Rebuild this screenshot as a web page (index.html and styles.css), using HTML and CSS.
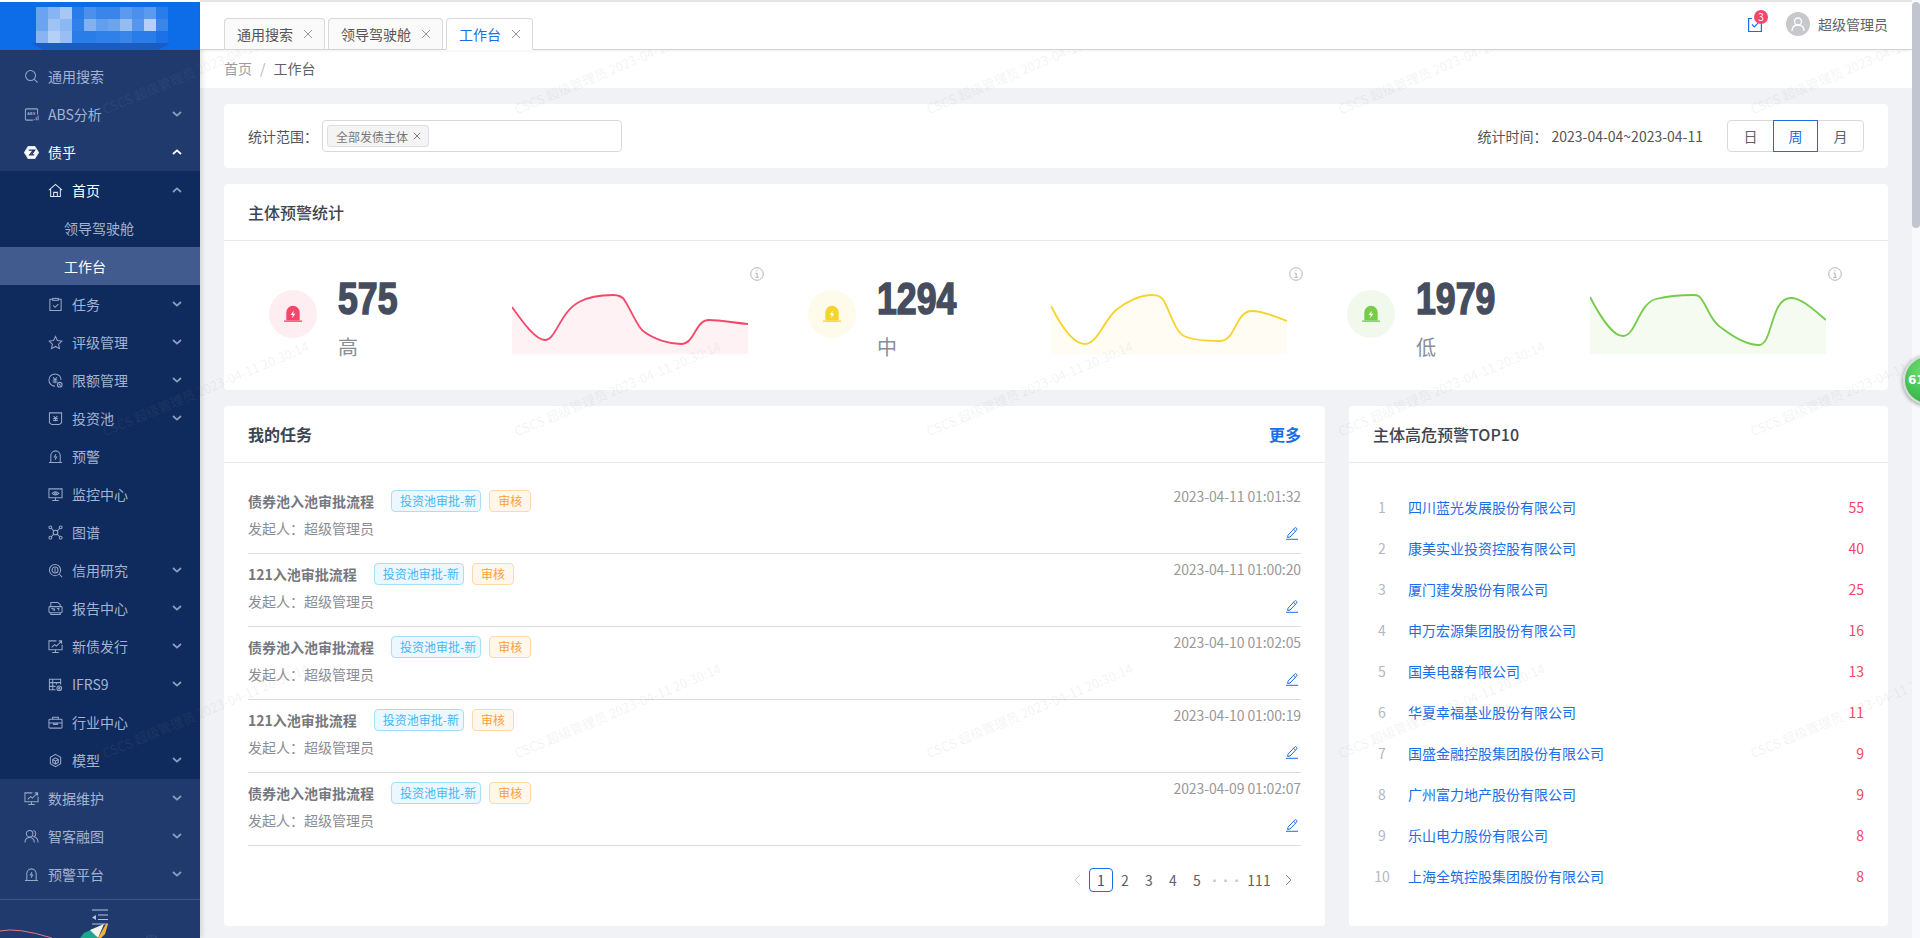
FILE: index.html
```html
<!DOCTYPE html>
<html lang="zh-CN">
<head>
<meta charset="UTF-8">
<title>工作台</title>
<link rel="stylesheet" href="styles.css">
</head>
<body>

<!-- shared icon set for the side menu -->
<svg class="icon-defs" xmlns="http://www.w3.org/2000/svg">
    <symbol id="i-search" viewBox="0 0 16 16"><circle cx="7" cy="7" r="5.3"/><path d="M11 11l3.6 3.6"/></symbol>
    <symbol id="i-home" viewBox="0 0 16 16"><path d="M1 7.5L8 1.5l7 6M2.8 6.5V14.500h10.400V6.500"/><path d="M6 14.500V10h4v4.500"/></symbol>
    <symbol id="i-task" viewBox="0 0 16 16"><path d="M5 2.500H2v12h12v-12h-3"/><rect x="5" y="1.500" width="6" height="2"/><path d="M5.500 9l2 2 3.500-3.500"/></symbol>
    <symbol id="i-star" viewBox="0 0 16 16"><path d="M8 1.500l2 4.400 4.700.6-3.400 3.300.9 4.700L8 12.200l-4.200 2.300.9-4.700L1.300 6.500 6 5.900z"/></symbol>
    <symbol id="i-limit" viewBox="0 0 16 16"><path d="M14 7.500A6.500 6.500 0 1 0 7.500 14"/><path d="M5.500 4.500l2 2.500 2-2.500M5 7.500h5M5 9.500h5M7.500 7v4"/><circle cx="12.500" cy="12.500" r="2.500"/><path d="M11.500 11.500l2 2"/></symbol>
    <symbol id="i-pool" viewBox="0 0 16 16"><path d="M1.500 2h13v10.500L12 14.500H4l-2.500-2z"/><path d="M6 5.500l2 2 2-2M5.500 8h5M5.500 10h5M8 7.500V11"/></symbol>
    <symbol id="i-alarm" viewBox="0 0 16 16"><path d="M3 14.500V7a5 5 0 0 1 10 0v7.500M1 14.500h14"/><path d="M8.500 5.500L6.800 8.500h2.400L7.500 11.500"/></symbol>
    <symbol id="i-monitor" viewBox="0 0 16 16"><path d="M1 2h14v9.500H1zM8 11.500v2.500M4.500 14.500h7"/><path d="M4.500 6.800C6.500 4.500 9.500 4.500 11.500 6.800 9.500 9 6.500 9 4.500 6.800z"/><circle cx="8" cy="6.800" r="1"/></symbol>
    <symbol id="i-graph" viewBox="0 0 16 16"><circle cx="8" cy="8" r="2.500"/><circle cx="2.500" cy="2.500" r="1.500"/><circle cx="13.500" cy="2.500" r="1.500"/><circle cx="2.500" cy="13.500" r="1.500"/><circle cx="13.500" cy="13.500" r="1.500"/><path d="M3.600 3.600l2.600 2.600M12.400 3.600L9.800 6.200M3.600 12.400l2.600-2.600M12.400 12.400L9.800 9.800"/></symbol>
    <symbol id="i-credit" viewBox="0 0 16 16"><circle cx="7.500" cy="7.500" r="6"/><circle cx="7.500" cy="7.500" r="3.200"/><path d="M12 12l3 3M6.500 6.500h2M6.500 8.500h2"/></symbol>
    <symbol id="i-report" viewBox="0 0 16 16"><path d="M3 6V1.500h7.500L13 4v2"/><rect x="1" y="6" width="14" height="6.500" rx="1"/><path d="M3 12.500v2h10v-2M3.500 8h2v2.500M7 8v2.500M9.500 8h2v2.500"/></symbol>
    <symbol id="i-issue" viewBox="0 0 16 16"><path d="M9 2H1v9.500h14V6M8 11.500v2.500M4.500 14.500h7"/><path d="M4 9l3-3 2 1.500L14 2.500M11.500 2H14.500v3"/></symbol>
    <symbol id="i-ifrs" viewBox="0 0 16 16"><path d="M8 13.500H1.500v-11h12V8M1.500 6h12M1.500 10H8M5 2.500v11M9 6v2"/><circle cx="12" cy="12" r="2.500"/><circle cx="12" cy="12" r=".7"/></symbol>
    <symbol id="i-case" viewBox="0 0 16 16"><rect x="1" y="4.500" width="14" height="9.500" rx="1"/><path d="M5 4.500V2.500h6v2M1 8.500h14M6 8.500v1.500h4V8.500"/></symbol>
    <symbol id="i-cube" viewBox="0 0 16 16"><path d="M8 1.500l5.500 3.200v6.600L8 14.500l-5.500-3.200V4.700z"/><path d="M8 5.200l3 1.800v3L8 11.800 5 10V7zM5 7l3 1.700L11 7M8 8.700v3.100"/></symbol>
    <symbol id="i-users" viewBox="0 0 16 16"><circle cx="6" cy="5" r="3.500"/><path d="M1 14.500c0-3.500 2-5.500 5-5.500s5 2 5 5.500M10 1.700a3.500 3.500 0 0 1 .5 6.600c2.500.5 4.500 2.500 4.500 6.200"/></symbol>
    <symbol id="i-down" viewBox="0 0 10 6"><path d="M1 1l4 3.600L9 1"/></symbol>
    <symbol id="i-up" viewBox="0 0 10 6"><path d="M1 5l4-3.600L9 5"/></symbol>
    <symbol id="i-close" viewBox="0 0 10 10"><path d="M1 1l8 8M9 1l-8 8"/></symbol>
    <symbol id="i-bell" viewBox="0 0 18 18"><path d="M2.300 15.500V7.500a6.700 6.700 0 0 1 13.400 0v8z"/><rect x="0" y="15.500" width="18" height="1.300"/><path class="bolt" d="M9.800 5.500L6.700 10h2l-.6 3.300 3.200-4.600H9.200z"/></symbol>
    <symbol id="i-info" viewBox="0 0 14 14"><circle cx="7" cy="7" r="6.300"/><path d="M5.500 6.200H7.200v4M5.300 10.400h3.500M6.300 3.800h1.200"/></symbol>
    <symbol id="i-pen" viewBox="0 0 14 14"><path d="M3 9.200l6.500-7a1.300 1.300 0 0 1 2 0 1.400 1.400 0 0 1 0 2L5 11l-2.400.5zM8.500 3.300l2.200 2M1 13.300h12"/></symbol>
</svg>

<div class="app">

    <aside class="sidebar">
        <div class="logo">
            <svg width="200" height="48" viewBox="0 0 200 48">
                <path d="M31 41H170L158 48H44z" fill="#1b5cc2"/>
                <path d="M36 5H60L82 7H36z" fill="#4a8cec"/>
                <g>
                    <rect x="36" y="5" width="12" height="12" fill="#6aa4f0"/><rect x="48" y="5" width="12" height="12" fill="#86b5f2"/><rect x="60" y="5" width="12" height="12" fill="#a8c7f4"/><rect x="72" y="5" width="12" height="12" fill="#2a7de8"/><rect x="84" y="5" width="12" height="12" fill="#4b90ec"/><rect x="96" y="5" width="12" height="12" fill="#3a85ea"/><rect x="108" y="5" width="12" height="12" fill="#3a85ea"/><rect x="120" y="5" width="12" height="12" fill="#5b9bef"/><rect x="132" y="5" width="12" height="12" fill="#4b90ec"/><rect x="144" y="5" width="12" height="12" fill="#5b9bef"/><rect x="156" y="5" width="12" height="12" fill="#2a7de8"/>
                    <rect x="36" y="17" width="12" height="12" fill="#6aa4f0"/><rect x="48" y="17" width="12" height="12" fill="#a0c3f5"/><rect x="60" y="17" width="12" height="12" fill="#8ab8f3"/><rect x="72" y="17" width="12" height="12" fill="#3080ea"/><rect x="84" y="17" width="12" height="12" fill="#82b0f0"/><rect x="96" y="17" width="12" height="12" fill="#60a0ee"/><rect x="108" y="17" width="12" height="12" fill="#6ca5ee"/><rect x="120" y="17" width="12" height="12" fill="#94bcf2"/><rect x="132" y="17" width="12" height="12" fill="#5696ec"/><rect x="144" y="17" width="12" height="12" fill="#b4d0f8"/><rect x="156" y="17" width="12" height="12" fill="#3a85ea"/>
                    <rect x="36" y="29" width="12" height="12" fill="#88b5f2"/><rect x="48" y="29" width="12" height="12" fill="#b4d0f8"/><rect x="60" y="29" width="12" height="12" fill="#98bff4"/><rect x="72" y="29" width="12" height="12" fill="#2a7de8"/><rect x="84" y="29" width="12" height="12" fill="#2a7de8"/><rect x="96" y="29" width="12" height="12" fill="#3080ea"/><rect x="108" y="29" width="12" height="12" fill="#3080ea"/><rect x="120" y="29" width="12" height="12" fill="#3a85ea"/><rect x="132" y="29" width="12" height="12" fill="#2a7de8"/><rect x="144" y="29" width="12" height="12" fill="#2a7de8"/><rect x="156" y="29" width="12" height="12" fill="#1a72e6"/>
                </g>
            </svg>
        </div>

        <nav class="menu">
            <div class="menu-item"><svg class="mi"><use href="#i-search"/></svg><span>通用搜索</span></div>
            <div class="menu-item">
                <svg class="mi" viewBox="0 0 16 16"><path d="M14.500 8V3a1 1 0 0 0-1-1h-11a1 1 0 0 0-1 1v10a1 1 0 0 0 1 1h7"/><text class="abs-mark" x="3.200" y="8">ABS</text><path d="M11 14v-1M13 14v-3M15 14V9"/></svg>
                <span>ABS分析</span><svg class="arrow"><use href="#i-down"/></svg>
            </div>
            <div class="menu-item is-open">
                <svg class="mi mi-solid" viewBox="0 0 16 16"><path d="M4.500 1.500h7L15.500 8l-4 6.500h-7L.5 8z"/><path class="cut" d="M5 5.500h5L6 10.500h5M9 5.500h2.500L8 10.500"/></svg>
                <span>债乎</span><svg class="arrow"><use href="#i-up"/></svg>
            </div>
            <div class="submenu">
                <div class="menu-item lv2 is-open"><svg class="mi"><use href="#i-home"/></svg><span>首页</span><svg class="arrow arrow-dim"><use href="#i-up"/></svg></div>
                <div class="menu-item lv3"><span>领导驾驶舱</span></div>
                <div class="menu-item lv3 is-active"><span>工作台</span></div>
                <div class="menu-item lv2"><svg class="mi"><use href="#i-task"/></svg><span>任务</span><svg class="arrow"><use href="#i-down"/></svg></div>
                <div class="menu-item lv2"><svg class="mi"><use href="#i-star"/></svg><span>评级管理</span><svg class="arrow"><use href="#i-down"/></svg></div>
                <div class="menu-item lv2"><svg class="mi"><use href="#i-limit"/></svg><span>限额管理</span><svg class="arrow"><use href="#i-down"/></svg></div>
                <div class="menu-item lv2"><svg class="mi"><use href="#i-pool"/></svg><span>投资池</span><svg class="arrow"><use href="#i-down"/></svg></div>
                <div class="menu-item lv2"><svg class="mi"><use href="#i-alarm"/></svg><span>预警</span></div>
                <div class="menu-item lv2"><svg class="mi"><use href="#i-monitor"/></svg><span>监控中心</span></div>
                <div class="menu-item lv2"><svg class="mi"><use href="#i-graph"/></svg><span>图谱</span></div>
                <div class="menu-item lv2"><svg class="mi"><use href="#i-credit"/></svg><span>信用研究</span><svg class="arrow"><use href="#i-down"/></svg></div>
                <div class="menu-item lv2"><svg class="mi"><use href="#i-report"/></svg><span>报告中心</span><svg class="arrow"><use href="#i-down"/></svg></div>
                <div class="menu-item lv2"><svg class="mi"><use href="#i-issue"/></svg><span>新债发行</span><svg class="arrow"><use href="#i-down"/></svg></div>
                <div class="menu-item lv2"><svg class="mi"><use href="#i-ifrs"/></svg><span>IFRS9</span><svg class="arrow"><use href="#i-down"/></svg></div>
                <div class="menu-item lv2"><svg class="mi"><use href="#i-case"/></svg><span>行业中心</span></div>
                <div class="menu-item lv2"><svg class="mi"><use href="#i-cube"/></svg><span>模型</span><svg class="arrow"><use href="#i-down"/></svg></div>
            </div>
            <div class="menu-item"><svg class="mi"><use href="#i-issue"/></svg><span>数据维护</span><svg class="arrow"><use href="#i-down"/></svg></div>
            <div class="menu-item"><svg class="mi"><use href="#i-users"/></svg><span>智客融图</span><svg class="arrow"><use href="#i-down"/></svg></div>
            <div class="menu-item"><svg class="mi"><use href="#i-alarm"/></svg><span>预警平台</span><svg class="arrow"><use href="#i-down"/></svg></div>
        </nav>

        <div class="sidebar-foot">
            <svg class="foot-art" width="200" height="38" viewBox="0 0 200 38">
                <path d="M0 31Q17 27 52 38" fill="none" stroke="#e8788e" stroke-width="1"/>
                <path d="M92 10h16M98 15h10M98 19.500h10M92 24h16" stroke="#b6c1d8" stroke-width="1.200"/>
                <path d="M96 15l-4 2.500 4 2.500z" fill="#b6c1d8"/>
                <path d="M80 38l4-5 9-4 4 9z" fill="#1aa98f"/>
                <path d="M90 30l14-6-6 14z" fill="#f6f3ea"/>
                <path d="M98 38l8-14h2l-3 10-4 4z" fill="#f5b13c"/>
                <path d="M147 38v-2h9v2" fill="none" stroke="#3a4f7c" stroke-width="1.500" stroke-dasharray="1 1"/>
            </svg>
        </div>
    </aside>

    <div class="main">
        <header class="topbar">
            <div class="tabs">
                <div class="tab">通用搜索<svg class="tab-x"><use href="#i-close"/></svg></div>
                <div class="tab">领导驾驶舱<svg class="tab-x"><use href="#i-close"/></svg></div>
                <div class="tab is-active">工作台<svg class="tab-x"><use href="#i-close"/></svg></div>
            </div>
            <div class="top-right">
                <div class="notice">
                    <svg width="14" height="15" viewBox="0 0 14 15" fill="none" stroke="#1a6fe8" stroke-width="1.200"><path d="M4 1.500H.6v13h12.800v-13H10"/><path d="M4 7.500l2.300 2.300 3.700-3.700"/></svg>
                    <span class="badge">3</span>
                </div>
                <div class="avatar">
                    <svg width="14" height="14" viewBox="0 0 14 14" fill="none" stroke="#fff" stroke-width="1.300"><circle cx="7" cy="4.500" r="3.500"/><path d="M1 14c0-4 2.500-6 6-6s6 2 6 6"/></svg>
                </div>
                <span class="user-name">超级管理员</span>
            </div>
        </header>

        <div class="crumbs"><span class="crumb-home">首页</span><span class="crumb-sep">/</span><span>工作台</span></div>

        <div class="content">
            <section class="card filter-bar">
                <label class="filter-label">统计范围：</label>
                <div class="select-box"><span class="select-tag">全部发债主体<svg class="tag-x"><use href="#i-close"/></svg></span></div>
                <span class="time-label">统计时间：</span>
                <span class="time-range">2023-04-04~2023-04-11</span>
                <div class="btn-group">
                    <span class="btn">日</span>
                    <span class="btn is-active">周</span>
                    <span class="btn">月</span>
                </div>
            </section>

            <section class="card stats-card">
                <h2 class="card-head">主体预警统计</h2>
                <div class="stats">
                    <div class="stat stat-high">
                        <div class="stat-icon"><svg><use href="#i-bell"/></svg></div>
                        <div class="stat-text"><div class="stat-num">575</div><div class="stat-name">高</div></div>
                        <svg class="spark" width="236" height="60" viewBox="0 0 236 60">
                            <path class="spark-fill" d="M0 13C12 30 24 46 33 46C44 46 48 18 67 8C78 2 92 1 101 1C108 1 111 3 113 7C120 18 125 32 131 37C143 46 158 50 169 50C183 50 183 26 197 26C208 26 224 29 236 30V60H0z"/>
                            <path class="spark-line" d="M0 13C12 30 24 46 33 46C44 46 48 18 67 8C78 2 92 1 101 1C108 1 111 3 113 7C120 18 125 32 131 37C143 46 158 50 169 50C183 50 183 26 197 26C208 26 224 29 236 30"/>
                        </svg>
                        <svg class="info"><use href="#i-info"/></svg>
                    </div>
                    <div class="stat stat-mid">
                        <div class="stat-icon"><svg><use href="#i-bell"/></svg></div>
                        <div class="stat-text"><div class="stat-num">1294</div><div class="stat-name">中</div></div>
                        <svg class="spark" width="236" height="60" viewBox="0 0 236 60">
                            <path class="spark-fill" d="M0 12C10 32 22 50 34 50C46 50 52 28 65 16C76 7 90 1 101 1C108 1 110 3 113 7C120 20 124 37 133 42C144 47 158 47 169 47C185 47 184 17 201 17C212 17 226 23 236 27V60H0z"/>
                            <path class="spark-line" d="M0 12C10 32 22 50 34 50C46 50 52 28 65 16C76 7 90 1 101 1C108 1 110 3 113 7C120 20 124 37 133 42C144 47 158 47 169 47C185 47 184 17 201 17C212 17 226 23 236 27"/>
                        </svg>
                        <svg class="info"><use href="#i-info"/></svg>
                    </div>
                    <div class="stat stat-low">
                        <div class="stat-icon"><svg><use href="#i-bell"/></svg></div>
                        <div class="stat-text"><div class="stat-num">1979</div><div class="stat-name">低</div></div>
                        <svg class="spark" width="236" height="60" viewBox="0 0 236 60">
                            <path class="spark-fill" d="M0 3C10 22 22 42 33 42C46 42 48 10 66 5C78 2 92 1 103 1C110 1 110 3 114 9C120 20 124 30 133 35C145 44 158 51 169 51C183 51 180 4 201 4C212 4 226 18 236 26V60H0z"/>
                            <path class="spark-line" d="M0 3C10 22 22 42 33 42C46 42 48 10 66 5C78 2 92 1 103 1C110 1 110 3 114 9C120 20 124 30 133 35C145 44 158 51 169 51C183 51 180 4 201 4C212 4 226 18 236 26"/>
                        </svg>
                        <svg class="info"><use href="#i-info"/></svg>
                    </div>
                </div>
            </section>

            <div class="two-col">
                <section class="card tasks-card">
                    <div class="card-head"><h2>我的任务</h2><a class="more">更多</a></div>
                    <div class="task-list">
                        <div class="task">
                            <div class="task-main">
                                <div class="task-title"><strong>债券池入池审批流程</strong><span class="tag tag-blue">投资池审批-新</span><span class="tag tag-orange">审核</span></div>
                                <div class="task-from">发起人：超级管理员</div>
                            </div>
                            <div class="task-side"><span class="task-time">2023-04-11 01:01:32</span><svg class="pen"><use href="#i-pen"/></svg></div>
                        </div>
                        <div class="task">
                            <div class="task-main">
                                <div class="task-title"><strong>121入池审批流程</strong><span class="tag tag-blue">投资池审批-新</span><span class="tag tag-orange">审核</span></div>
                                <div class="task-from">发起人：超级管理员</div>
                            </div>
                            <div class="task-side"><span class="task-time">2023-04-11 01:00:20</span><svg class="pen"><use href="#i-pen"/></svg></div>
                        </div>
                        <div class="task">
                            <div class="task-main">
                                <div class="task-title"><strong>债券池入池审批流程</strong><span class="tag tag-blue">投资池审批-新</span><span class="tag tag-orange">审核</span></div>
                                <div class="task-from">发起人：超级管理员</div>
                            </div>
                            <div class="task-side"><span class="task-time">2023-04-10 01:02:05</span><svg class="pen"><use href="#i-pen"/></svg></div>
                        </div>
                        <div class="task">
                            <div class="task-main">
                                <div class="task-title"><strong>121入池审批流程</strong><span class="tag tag-blue">投资池审批-新</span><span class="tag tag-orange">审核</span></div>
                                <div class="task-from">发起人：超级管理员</div>
                            </div>
                            <div class="task-side"><span class="task-time">2023-04-10 01:00:19</span><svg class="pen"><use href="#i-pen"/></svg></div>
                        </div>
                        <div class="task">
                            <div class="task-main">
                                <div class="task-title"><strong>债券池入池审批流程</strong><span class="tag tag-blue">投资池审批-新</span><span class="tag tag-orange">审核</span></div>
                                <div class="task-from">发起人：超级管理员</div>
                            </div>
                            <div class="task-side"><span class="task-time">2023-04-09 01:02:07</span><svg class="pen"><use href="#i-pen"/></svg></div>
                        </div>
                    </div>
                    <div class="pager">
                        <span class="page page-arrow is-off"><svg width="8" height="12" viewBox="0 0 8 12"><path d="M7 1L2 6l5 5"/></svg></span>
                        <span class="page is-active">1</span>
                        <span class="page">2</span>
                        <span class="page">3</span>
                        <span class="page">4</span>
                        <span class="page">5</span>
                        <span class="page page-dots">•••</span>
                        <span class="page page-wide">111</span>
                        <span class="page page-arrow"><svg width="8" height="12" viewBox="0 0 8 12"><path d="M1 1l5 5-5 5"/></svg></span>
                    </div>
                </section>

                <section class="card top-card">
                    <h2 class="card-head">主体高危预警TOP10</h2>
                    <ol class="rank">
                        <li><span class="rank-no">1</span><a>四川蓝光发展股份有限公司</a><b>55</b></li>
                        <li><span class="rank-no">2</span><a>康美实业投资控股有限公司</a><b>40</b></li>
                        <li><span class="rank-no">3</span><a>厦门建发股份有限公司</a><b>25</b></li>
                        <li><span class="rank-no">4</span><a>申万宏源集团股份有限公司</a><b>16</b></li>
                        <li><span class="rank-no">5</span><a>国美电器有限公司</a><b>13</b></li>
                        <li><span class="rank-no">6</span><a>华夏幸福基业股份有限公司</a><b>11</b></li>
                        <li><span class="rank-no">7</span><a>国盛金融控股集团股份有限公司</a><b>9</b></li>
                        <li><span class="rank-no">8</span><a>广州富力地产股份有限公司</a><b>9</b></li>
                        <li><span class="rank-no">9</span><a>乐山电力股份有限公司</a><b>8</b></li>
                        <li><span class="rank-no">10</span><a>上海全筑控股集团股份有限公司</a><b>8</b></li>
                    </ol>
                </section>
            </div>
        </div>
    </div>

    <div class="scroll-track"><div class="scroll-thumb"></div></div>

    <!-- user stamp drawn over the whole workspace -->
    <div class="watermark">
        <span>CSCS 超级管理员 2023-04-11 20:30:14</span><span>CSCS 超级管理员 2023-04-11 20:30:14</span><span>CSCS 超级管理员 2023-04-11 20:30:14</span><span>CSCS 超级管理员 2023-04-11 20:30:14</span><span>CSCS 超级管理员 2023-04-11 20:30:14</span>
        <span>CSCS 超级管理员 2023-04-11 20:30:14</span><span>CSCS 超级管理员 2023-04-11 20:30:14</span><span>CSCS 超级管理员 2023-04-11 20:30:14</span><span>CSCS 超级管理员 2023-04-11 20:30:14</span><span>CSCS 超级管理员 2023-04-11 20:30:14</span>
        <span>CSCS 超级管理员 2023-04-11 20:30:14</span><span>CSCS 超级管理员 2023-04-11 20:30:14</span><span>CSCS 超级管理员 2023-04-11 20:30:14</span><span>CSCS 超级管理员 2023-04-11 20:30:14</span><span>CSCS 超级管理员 2023-04-11 20:30:14</span>
    </div>

    <div class="float-ball">61</div>
</div>

</body>
</html>
```

FILE: styles.css
```css
* {
    box-sizing: border-box;
}
html, body {
    margin: 0;
    height: 100%;
    overflow: hidden;
}
body {
    font-family: "Noto Sans CJK SC", "Noto Sans", sans-serif;
    font-size: 14px;
    color: #555;
}
h2 {
    margin: 0;
}
.icon-defs {
    position: absolute;
    width: 0;
    height: 0;
}

.app {
    position: relative;
    display: flex;
    height: 938px;
    overflow: hidden;
}

/* side menu */
.sidebar {
    position: relative;
    z-index: 1;
    flex: 0 0 200px;
    display: flex;
    flex-direction: column;
    background-color: #203a6e;
    box-shadow: 2px 0 5px rgba(0, 0, 0, 0.12);
}
.logo {
    flex: none;
    height: 50px;
    border-top: 2px solid #fff;
    background-color: #0d6ce8;
}
.logo svg {
    display: block;
}
.menu {
    flex: none;
    padding-top: 7px;
}
.submenu {
    background-color: #0f2a5c;
}
.menu-item {
    display: flex;
    align-items: center;
    height: 38px;
    padding: 0 18px 0 24px;
    color: #a3b3d1;
    line-height: 38px;
}
.menu-item.lv2 {
    padding-left: 48px;
}
.menu-item.lv3 {
    padding-left: 64px;
}
.menu-item.is-open {
    color: #fff;
}
.menu-item.is-active {
    background-color: #425b8e;
    color: #fff;
}
.mi {
    flex: 0 0 15px;
    width: 15px;
    height: 15px;
    margin-right: 9px;
    fill: none;
    stroke: #97a7c6;
    stroke-width: 1.1;
}
.abs-mark {
    font-family: "Liberation Sans", sans-serif;
    font-size: 4.2px;
    font-weight: 700;
    fill: #97a7c6;
    stroke: none;
}
.is-open > .mi {
    stroke: #dfe5f0;
}
.mi-solid {
    fill: #fff;
    stroke: none;
}
.mi-solid .cut {
    fill: none;
    stroke: #203a6e;
    stroke-width: 1.300;
}
.arrow {
    width: 10px;
    height: 6px;
    margin-left: auto;
    fill: none;
    stroke: #8b9cbe;
    stroke-width: 1.800;
}
.is-open > .arrow {
    stroke: #fff;
}
.is-open > .arrow-dim {
    stroke: #8b9cbe;
}
.sidebar-foot {
    margin-top: auto;
    height: 39px;
    border-top: 1px solid #3c5488;
}
.foot-art {
    display: block;
}

/* top bar with open pages */
.main {
    flex: 1;
    min-width: 0;
    display: flex;
    flex-direction: column;
}
.topbar {
    position: relative;
    z-index: 2;
    flex: none;
    display: flex;
    height: 50px;
    padding: 0 24px;
    background-color: #fff;
    border-top: 2px solid #e4e4e4;
    border-bottom: 1px solid #d2d2d2;
    box-shadow: 0 1px 3px rgba(0, 0, 0, 0.06);
}
.tabs {
    display: flex;
    align-items: flex-end;
    gap: 3px;
    margin-bottom: -1px;
}
.tab {
    display: flex;
    align-items: center;
    height: 32px;
    padding: 0 11px 0 12px;
    background-color: #fafafa;
    border: 1px solid #d9d9d9;
    border-bottom-color: #d2d2d2;
    border-radius: 4px 4px 0 0;
    color: #555;
}
.tab.is-active {
    background-color: #fff;
    border-bottom-color: #fff;
    color: #1a6fe8;
}
.tab-x {
    width: 10px;
    height: 10px;
    margin-left: 10px;
    fill: none;
    stroke: #999;
    stroke-width: 1;
}
.top-right {
    display: flex;
    align-items: center;
    margin-left: auto;
    margin-bottom: 3px;
}
.notice {
    position: relative;
    display: flex;
    margin-right: 24px;
}
.badge {
    position: absolute;
    top: -7px;
    left: 6px;
    width: 14px;
    height: 14px;
    border-radius: 50%;
    background-color: #f5476a;
    color: #fff;
    font-size: 10px;
    line-height: 14px;
    text-align: center;
}
.avatar {
    display: flex;
    align-items: center;
    justify-content: center;
    width: 24px;
    height: 24px;
    margin-right: 8px;
    border-radius: 50%;
    background-color: #c6c8cc;
}
.user-name {
    color: #606266;
}
.crumbs {
    flex: none;
    display: flex;
    align-items: center;
    height: 38px;
    padding: 0 0 2px 24px;
    background-color: #fff;
    color: #606266;
}
.crumb-home {
    color: #9a9da3;
}
.crumb-sep {
    margin: 0 8px;
    color: #b5b5b5;
}

/* workspace */
.content {
    flex: 1;
    min-height: 0;
    padding: 16px 24px;
    background-color: #f0f2f5;
}
.card {
    background-color: #fff;
    border-radius: 4px;
}
.card-head {
    display: flex;
    align-items: center;
    justify-content: space-between;
    height: 57px;
    padding: 0 24px 1px;
    border-bottom: 1px solid #e8eaee;
    font-size: 16px;
    font-weight: 500;
    color: #3d4451;
}
.card-head h2 {
    font-size: 16px;
    font-weight: 700;
    color: #3d4451;
}
.more {
    color: #1a6fe8;
    font-weight: 700;
}

.filter-bar {
    display: flex;
    align-items: center;
    height: 64px;
    padding: 0 24px;
    margin-bottom: 16px;
}
.filter-label {
    width: 74px;
}
.select-box {
    display: flex;
    align-items: center;
    width: 300px;
    height: 32px;
    padding-left: 4px;
    border: 1px solid #d9d9d9;
    border-radius: 4px;
}
.select-tag {
    display: flex;
    align-items: center;
    height: 22px;
    padding: 0 7px 0 8px;
    background-color: #f4f4f5;
    border: 1px solid #dcdfe6;
    border-radius: 3px;
    font-size: 12px;
    color: #777;
}
.tag-x {
    width: 8px;
    height: 8px;
    margin-left: 5px;
    fill: none;
    stroke: #777;
    stroke-width: 1.200;
}
.time-label {
    margin-left: auto;
}
.time-range {
    margin: 0 24px 0 4px;
}
.btn-group {
    display: flex;
    height: 32px;
    border: 1px solid #d9d9d9;
    border-radius: 4px;
}
.btn {
    width: 45px;
    line-height: 30px;
    text-align: center;
    color: #606266;
}
.btn.is-active {
    margin: -1px 0;
    height: 32px;
    border: 1px solid #1a6fe8;
    color: #1a6fe8;
}

.stats-card {
    margin-bottom: 16px;
}
.stats {
    display: grid;
    grid-template-columns: repeat(3, 539px);
    height: 149px;
    padding: 26px 0 0 24px;
}
.stat {
    display: flex;
    align-items: flex-start;
    padding-left: 21px;
}
.stat-icon {
    display: flex;
    align-items: center;
    justify-content: center;
    flex: 0 0 48px;
    height: 48px;
    margin-top: 23px;
    border-radius: 50%;
}
.stat-icon svg {
    width: 18px;
    height: 18px;
}
.bolt {
    fill: #fff;
}
.stat-text {
    flex: 0 0 195px;
    padding-left: 21px;
    margin-top: 12px;
}
.stat-num {
    font-family: "Liberation Sans", sans-serif;
    font-size: 44px;
    font-weight: 700;
    line-height: 40px;
    color: #454d5e;
    -webkit-text-stroke: 1.6px #454d5e;
    transform: scaleX(0.81);
    transform-origin: 0 50%;
}
.stat-name {
    margin-top: 14px;
    font-size: 20px;
    line-height: 28px;
    color: #8a8d93;
}
.spark {
    margin-top: 27px;
    flex: none;
}
.spark-line {
    fill: none;
    stroke-width: 1.800;
}
.info {
    flex: none;
    width: 14px;
    height: 14px;
    margin-left: 2px;
    fill: none;
    stroke: #a9adb5;
    stroke-width: 0.9;
}
.stat-high .stat-icon { background-color: #ffeef1; }
.stat-high .stat-icon svg { fill: #f5476a; }
.stat-high .spark-fill { fill: #fff2f5; }
.stat-high .spark-line { stroke: #f5476a; }
.stat-mid .stat-icon { background-color: #fffbea; }
.stat-mid .stat-icon svg { fill: #f6d32d; }
.stat-mid .spark-fill { fill: #fffcf3; }
.stat-mid .spark-line { stroke: #f6d32d; }
.stat-low .stat-icon { background-color: #f1f9ec; }
.stat-low .stat-icon svg { fill: #76cc4a; }
.stat-low .spark-fill { fill: #f6fbf2; }
.stat-low .spark-line { stroke: #76cc4a; }

.two-col {
    display: flex;
    gap: 24px;
}
.tasks-card {
    flex: 0 0 1101px;
    height: 520px;
}
.top-card {
    flex: 1;
    height: 520px;
}
.task-list {
    padding: 18px 24px 0;
}
.task {
    display: flex;
    justify-content: space-between;
    height: 73px;
    padding-top: 9px;
    border-bottom: 1px solid #dcdcdc;
}
.task-title {
    display: flex;
    align-items: center;
    height: 22px;
}
.task-title strong {
    margin-right: 17px;
    font-weight: 700;
    color: #75787f;
}
.tag {
    height: 22px;
    margin-right: 8px;
    padding: 0 8px;
    border: 1px solid;
    border-radius: 4px;
    font-size: 12px;
    line-height: 20px;
}
.tag-blue {
    padding: 0 4px 0 8px;
    background-color: #ecf8ff;
    border-color: #a5dffa;
    color: #45b6f5;
}
.tag-orange {
    background-color: #fff6ec;
    border-color: #ffd9a8;
    color: #ffa03c;
}
.task-from {
    margin-top: 5px;
    line-height: 22px;
    color: #8a8d93;
}
.task-side {
    display: flex;
    flex-direction: column;
    align-items: flex-end;
    margin-top: -4px;
}
.task-time {
    line-height: 20px;
    letter-spacing: -0.1px;
    color: #999;
}
.pen {
    width: 14px;
    height: 14px;
    margin: 20px 2px 0 0;
    fill: none;
    stroke: #1a6fe8;
    stroke-width: 1;
}
.pager {
    display: flex;
    justify-content: flex-end;
    padding: 22px 24px 0 0;
}
.page {
    display: flex;
    align-items: center;
    justify-content: center;
    width: 24px;
    height: 24px;
    color: #606266;
}
.page.is-active {
    border: 1px solid #1a6fe8;
    border-radius: 4px;
    color: #3a4f7c;
}
.page-dots {
    width: 32px;
    font-size: 12px;
    letter-spacing: -1px;
    color: #c4c6cb;
}
.page-wide {
    width: 36px;
}
.page-arrow svg {
    fill: none;
    stroke: #888;
    stroke-width: 1;
}
.page-arrow.is-off svg {
    stroke: #c8c8c8;
}

.rank {
    list-style: none;
    margin: 0;
    padding: 23px 24px 0 25px;
}
.rank li {
    display: flex;
    align-items: center;
    height: 41px;
}
.rank-no {
    flex: 0 0 16px;
    text-align: center;
    color: #b5b7bc;
}
.rank a {
    margin-left: 18px;
    color: #1a6fe8;
}
.rank b {
    margin-left: auto;
    font-weight: 400;
    color: #f5476a;
}

.scroll-track {
    position: relative;
    z-index: 2;
    flex: 0 0 8px;
    padding-top: 2px;
    background-color: #f8f9fc;
}
.scroll-thumb {
    height: 226px;
    border-radius: 4px;
    background-color: #c1c5cf;
}

/* stamp lies above the content but under the top bar */
.watermark {
    position: absolute;
    inset: 0;
    z-index: 1;
    display: grid;
    grid-template-columns: repeat(5, 412px);
    grid-auto-rows: 322px;
    padding: 100px 0 0 103px;
    pointer-events: none;
    overflow: hidden;
}
.watermark span {
    height: 20px;
    width: 240px;
    font-size: 13px;
    line-height: 20px;
    white-space: nowrap;
    color: rgba(150, 150, 150, 0.12);
    transform: rotate(-22.8deg);
    transform-origin: 0 50%;
}

.float-ball {
    position: absolute;
    top: 355px;
    left: 1903px;
    z-index: 3;
    width: 50px;
    height: 50px;
    padding-left: 3px;
    border: 2px solid #d8dcd8;
    border-radius: 50%;
    background: radial-gradient(circle at 40% 30%, #6fdc70, #36b94a 70%);
    box-shadow: 0 1px 4px rgba(0, 0, 0, 0.45);
    font-family: "DejaVu Sans", sans-serif;
    font-size: 12px;
    font-weight: 700;
    line-height: 46px;
    color: #fff;
}
```
